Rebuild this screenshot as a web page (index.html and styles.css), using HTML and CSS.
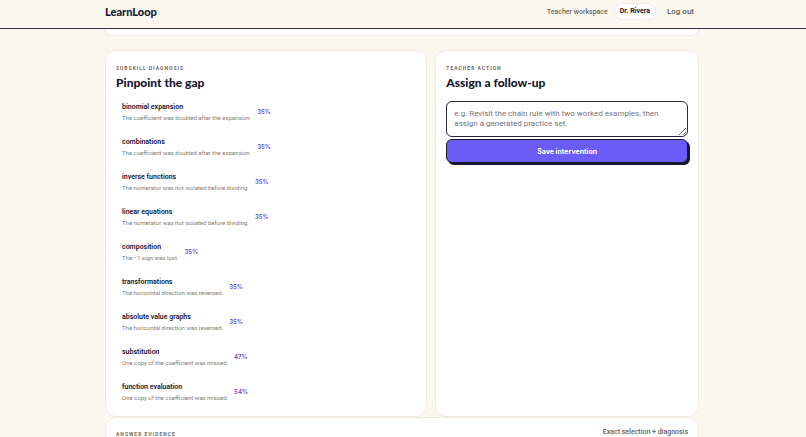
FILE: index.html
```html
<!DOCTYPE html>
<html lang="en">
<head>
<meta charset="utf-8">
<meta name="viewport" content="width=device-width, initial-scale=1">
<title>LearnLoop</title>
<link rel="stylesheet" href="styles.css">
</head>
<body>
<header class="topbar">
  <div class="container topbar-inner">
    <a class="brand" href="#">LearnLoop</a>
    <nav class="account">
      <span class="workspace">Teacher workspace</span>
      <span class="user">Dr. Rivera</span>
      <button class="logout" type="button">Log out</button>
    </nav>
  </div>
</header>
<main class="page">
<div class="container">
  <section class="panel panel-tail"></section>
  <div class="columns">
    <section class="panel">
      <p class="eyebrow">Subskill diagnosis</p>
      <h2>Pinpoint the gap</h2>
      <ul class="skills">
        <li><div><strong>binomial expansion</strong><p>The coefficient was doubled after the expansion.</p></div><b>35%</b></li>
        <li><div><strong>combinations</strong><p>The coefficient was doubled after the expansion.</p></div><b>35%</b></li>
        <li><div><strong>inverse functions</strong><p>The numerator was not isolated before dividing.</p></div><b>35%</b></li>
        <li><div><strong>linear equations</strong><p>The numerator was not isolated before dividing.</p></div><b>35%</b></li>
        <li><div><strong>composition</strong><p>The −1 sign was lost.</p></div><b>35%</b></li>
        <li><div><strong>transformations</strong><p>The horizontal direction was reversed.</p></div><b>35%</b></li>
        <li><div><strong>absolute value graphs</strong><p>The horizontal direction was reversed.</p></div><b>35%</b></li>
        <li><div><strong>substitution</strong><p>One copy of the coefficient was missed.</p></div><b>47%</b></li>
        <li><div><strong>function evaluation</strong><p>One copy of the coefficient was missed.</p></div><b>54%</b></li>
      </ul>
    </section>
    <section class="panel">
      <p class="eyebrow">Teacher action</p>
      <h2>Assign a follow-up</h2>
      <form class="followup">
        <textarea rows="2" aria-label="Follow-up" placeholder="e.g. Revisit the chain rule with two worked examples, then assign a generated practice set."></textarea>
        <button class="save" type="button">Save intervention</button>
      </form>
    </section>
  </div>
  <section class="panel evidence">
    <p class="eyebrow">Answer evidence</p>
    <span class="note">Exact selection + diagnosis</span>
  </section>
</div>
</main>
</body>
</html>
```
FILE: styles.css
```css
* { box-sizing: border-box; }
body {
  margin: 0;
  height: 100vh;
  overflow: hidden;
  background: #faf7ef;
  color: #17152f;
  font-family: Roboto, "Liberation Sans", sans-serif;
  font-size: 7px;
}
p, h2, ul { margin: 0; padding: 0; }
.container { width: calc(100% - 32px); max-width: 594px; margin: 0 auto; }
.topbar, .page { padding-right: 2px; }
.topbar { border-bottom: 1px solid #37323f; }
.topbar-inner { display: flex; align-items: center; justify-content: space-between; height: 28px; padding-bottom: 5px; }
.brand, h2 { font-family: Lato, sans-serif; font-size: 12px; font-weight: 900; }
.brand { color: #17152f; font-size: 11px; text-decoration: none; }
.account { display: flex; align-items: center; gap: 6px; }
.workspace { color: #6d6964; font-weight: 500; }
.user { padding: 0 5px; border: 1px solid #efebe4; border-radius: 9px; background: #fff; font-weight: 700; line-height: 15px; }
.logout { padding: 0 5px; border: 0; background: none; color: #5d5956; font: inherit; font-size: 8px; font-weight: 500; }
.panel { padding: 13px 10px 7px; border: 1px solid #efebe4; border-radius: 11px; background: #fff; }
.panel-tail { height: 7px; padding: 0; border-top: 0; border-radius: 0 0 10px 10px; }
.columns { display: grid; grid-template-columns: 11fr 9fr; gap: 8px; margin-top: 14px; }
.eyebrow { color: #6f6b62; font-size: 5px; font-weight: 700; line-height: 8px; letter-spacing: 1px; text-transform: uppercase; }
h2 { margin-top: 3px; line-height: 15px; }
.skills { margin-top: 4px; list-style: none; }
.skills li { display: flex; align-items: center; gap: 6px; height: 35px; padding: 0 6px; }
.skills strong { display: block; font-size: 7px; font-weight: 600; line-height: 12px; }
.skills p { color: #817d75; font-size: 6px; line-height: 10px; }
.skills b { color: #5b48dc; font-family: Inter, sans-serif; font-size: 6px; font-weight: 600; }
.followup { display: flex; flex-direction: column; gap: 2px; margin-top: 11px; }
textarea { width: 100%; height: 36px; padding: 7px; border: 1px solid #28253a; border-radius: 6px; background: #fff; color: inherit; font: inherit; font-size: 8px; line-height: 10px; resize: vertical; }
textarea::placeholder { color: #76747a; }
.save { height: 24px; border: 1px solid #17152f; border-radius: 6px; background: #6c5cf7; box-shadow: 2px 2px 0 #17152f; color: #fff; font-family: Inter, sans-serif; font-size: 7px; font-weight: 700; }
.evidence { display: flex; justify-content: space-between; min-height: 20px; padding-top: 12px; }
.note { color: #625e59; font-weight: 500; line-height: 8px; margin-top: -2px; }
```
